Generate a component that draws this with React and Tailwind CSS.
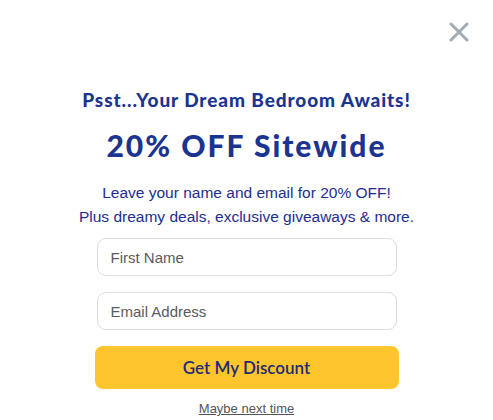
export default function App() {
  return (
    <div className="relative w-[493px] h-[420px] bg-white overflow-hidden">
      <button
        aria-label="Close"
        className="absolute left-[449px] top-[22px] w-[20px] h-[20px] flex items-center justify-center"
      >
        <svg width="20" height="20" viewBox="0 0 20 20">
          <path d="M2 2 L18 18 M18 2 L2 18" stroke="#a3abb1" strokeWidth="3" strokeLinecap="round" />
        </svg>
      </button>

      <div className="flex flex-col items-center pt-[87px]">
        <h2 className="text-[19px] leading-[26px] font-black text-[#1b3490] font-['Lato','Noto_Sans',sans-serif] tracking-[0.9px] whitespace-nowrap">
          Psst...Your Dream Bedroom Awaits!
        </h2>
        <h1 className="mt-[14px] text-[30px] leading-[36px] font-black text-[#1b3490] font-['Lato','Noto_Sans',sans-serif] tracking-[2px] whitespace-nowrap">
          20% OFF Sitewide
        </h1>
        <div className="mt-[18px] flex flex-col items-center text-[15.5px] leading-[24px] text-[#1d2e8f] font-['Liberation_Sans',Arial,sans-serif] whitespace-nowrap">
          <p>Leave your name and email for 20% OFF!</p>
          <p>Plus dreamy deals, exclusive giveaways &amp; more.</p>
        </div>

        <form className="mt-[9px] flex flex-col items-center gap-[16px]">
          <input
            type="text"
            placeholder="First Name"
            className="w-[300px] h-[38px] rounded-[9px] border border-[#dddddd] px-[13px] text-[15px] font-['Liberation_Sans',Arial,sans-serif] placeholder:text-[#5b5b5b] outline-none"
          />
          <input
            type="email"
            placeholder="Email Address"
            className="w-[300px] h-[38px] rounded-[9px] border border-[#dddddd] px-[13px] text-[15px] font-['Liberation_Sans',Arial,sans-serif] placeholder:text-[#5b5b5b] outline-none"
          />
          <button
            type="button"
            className="w-[304px] h-[43px] rounded-[8px] bg-[#fec52c] text-[#1e2a78] text-[17px] font-semibold font-['Lato','Noto_Sans',sans-serif]"
          >
            Get My Discount
          </button>
        </form>

        <a
          href="#"
          className="mt-[12px] text-[13px] leading-[16px] text-[#555555] underline font-['Liberation_Sans',Arial,sans-serif]"
        >
          Maybe next time
        </a>
      </div>
    </div>
  );
}
